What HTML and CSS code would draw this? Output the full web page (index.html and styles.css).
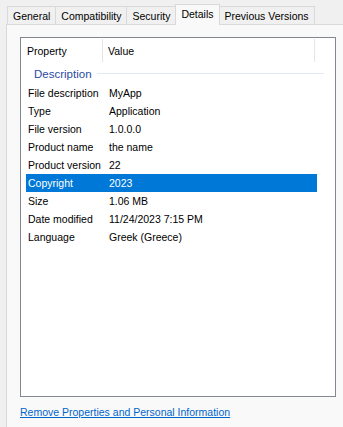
FILE: index.html
```html
<!DOCTYPE html>
<html lang="en">
<head>
    <meta charset="UTF-8">
    <title>Properties - Details</title>
    <link rel="stylesheet" href="styles.css">
</head>
<body>
    <div class="tabs">
        <div class="tab">General</div>
        <div class="tab">Compatibility</div>
        <div class="tab">Security</div>
        <div class="tab active">Details</div>
        <div class="tab">Previous Versions</div>
    </div>

    <div class="panel">
        <div class="list">
            <div class="list-header">
                <div class="col col-prop">Property</div>
                <div class="col col-value">Value</div>
                <div class="col col-rest"></div>
            </div>

            <div class="group">
                <span class="group-title">Description</span>
                <span class="group-line"></span>
            </div>

            <div class="row"><span>File description</span><span>MyApp</span></div>
            <div class="row"><span>Type</span><span>Application</span></div>
            <div class="row"><span>File version</span><span>1.0.0.0</span></div>
            <div class="row"><span>Product name</span><span>the name</span></div>
            <div class="row"><span>Product version</span><span>22</span></div>
            <div class="row selected"><span>Copyright</span><span>2023</span></div>
            <div class="row"><span>Size</span><span>1.06 MB</span></div>
            <div class="row"><span>Date modified</span><span>11/24/2023 7:15 PM</span></div>
            <div class="row"><span>Language</span><span>Greek (Greece)</span></div>
        </div>

        <a class="remove-link" href="#">Remove Properties and Personal Information</a>
    </div>
</body>
</html>
```

FILE: styles.css
```css
body {
    margin: 0;
    background-color: #f0f0f0;
    font-family: "Liberation Sans", Arial, sans-serif;
    font-size: 10.5px;
    color: #000;
    overflow: hidden;
}
.tabs {
    display: flex;
    align-items: flex-end;
    height: 24px;
    padding-left: 7px;
}
.tab {
    height: 17px;
    line-height: 18px;
    padding: 0 5px;
    background-color: #f0f0f0;
    border: 1px solid #d9d9d9;
    border-bottom: none;
    margin-right: -1px;
}
.tab.active {
    position: relative;
    height: 20px;
    line-height: 18px;
    background-color: #f9f9f9;
    margin-bottom: -1px;
    z-index: 1;
}
.panel {
    margin-left: 6px;
    margin-right: -4px;
    height: 410px;
    background-color: #f9f9f9;
    border: 1px solid #d9d9d9;
    padding: 12px 0 0 13px;
}
.list {
    width: 314px;
    height: 358px;
    background: white;
    border: 1px solid #828790;
}
.list-header {
    display: flex;
    height: 25px;
}
.col {
    border-right: 1px solid #e5e5e5;
    margin-top: 1px;
    height: 23px;
    line-height: 24px;
}
.col-prop {
    width: 75px;
    padding-left: 6px;
}
.col-value {
    width: 206px;
    padding-left: 5px;
}
.col-rest {
    border-right: none;
}
.group {
    display: flex;
    align-items: center;
    height: 21px;
    padding-left: 13px;
}
.group-title {
    color: #2b4ba5;
    font-size: 11.5px;
}
.group-line {
    flex: none;
    width: 227px;
    height: 1px;
    margin-left: 5px;
    background-color: #e2e8f5;
}
.row {
    display: grid;
    grid-template-columns: 81px 1fr;
    width: 291px;
    height: 18px;
    line-height: 18px;
    margin-left: 5px;
}
.row span {
    padding-left: 2px;
    white-space: nowrap;
}
.row.selected {
    background-color: #0078d7;
    color: white;
}
.remove-link {
    display: inline-block;
    margin-top: 9px;
    color: #0066cc;
    text-decoration: underline;
}
```
